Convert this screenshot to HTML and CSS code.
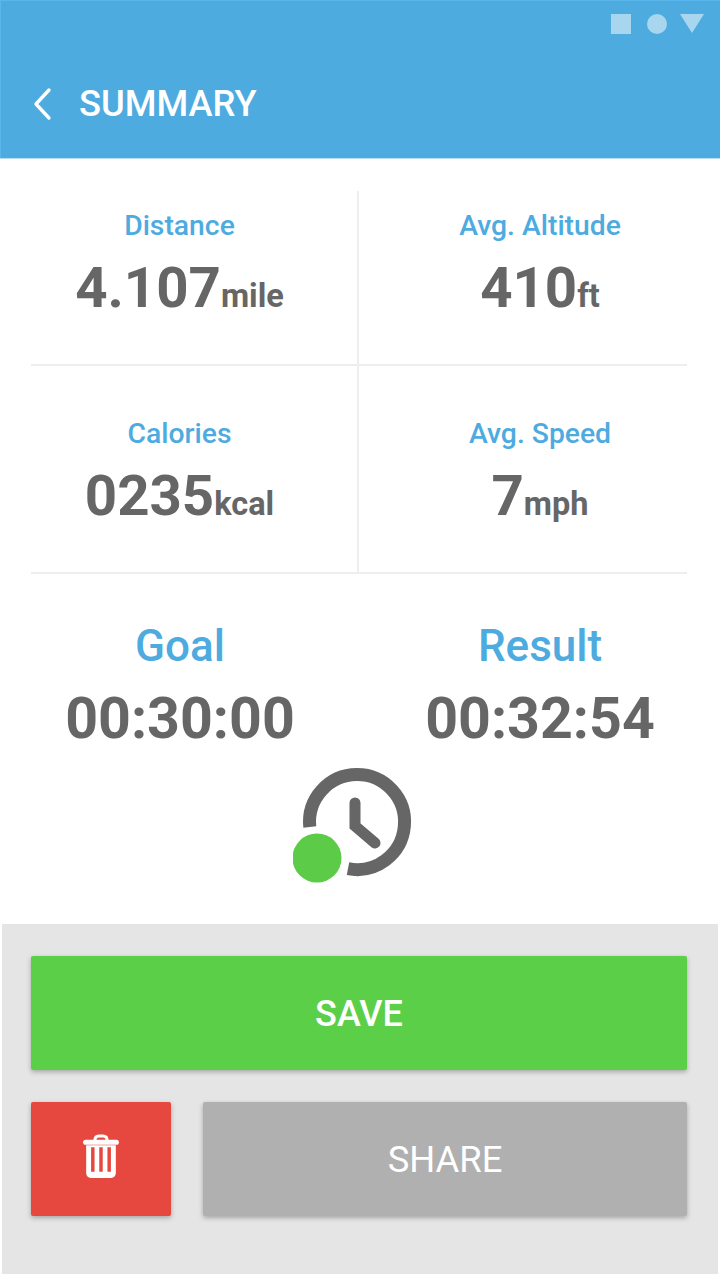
FILE: index.html
```html
<!DOCTYPE html>
<html lang="en">
<head>
<meta charset="utf-8">
<title>Summary</title>
<link rel="stylesheet" href="styles.css">
</head>
<body>
<div class="screen">
  <header class="appbar">
    <div class="status">
      <span class="st-square"></span>
      <span class="st-circle"></span>
      <svg class="st-tri" width="24" height="20" viewBox="0 0 24 20"><path d="M0 0H24L12 19Z" fill="#a8d6ef"/></svg>
    </div>
    <div class="titlebar">
      <svg class="back" width="20" height="34" viewBox="0 0 20 34"><path d="M17 3L4 17L17 31" fill="none" stroke="#fff" stroke-width="3.4" stroke-linecap="round" stroke-linejoin="round"/></svg>
      <h1 class="title">SUMMARY</h1>
    </div>
  </header>

  <section class="stats">
    <div class="stat stat-l">
      <div class="label">Distance</div>
      <div class="value">4.107<span class="unit">mile</span></div>
    </div>
    <div class="stat stat-e">
      <div class="label">Avg. Altitude</div>
      <div class="value">410<span class="unit">ft</span></div>
    </div>
    <div class="stat stat-l">
      <div class="label">Calories</div>
      <div class="value">0235<span class="unit">kcal</span></div>
    </div>
    <div class="stat stat-e">
      <div class="label">Avg. Speed</div>
      <div class="value">7<span class="unit">mph</span></div>
    </div>
  </section>

  <section class="times">
    <div class="time">
      <div class="time-label">Goal</div>
      <div class="time-value">00:30:00</div>
    </div>
    <div class="time">
      <div class="time-label">Result</div>
      <div class="time-value">00:32:54</div>
    </div>
  </section>

  <div class="clock-wrap">
    <svg class="clock" width="124" height="120" viewBox="0 0 124 120">
      <path d="M16.800 60A47.500 47.500 0 1 1 55 101.700" fill="none" stroke="#666" stroke-width="13"/>
      <path d="M62 36V59L82 76" fill="none" stroke="#666" stroke-width="11" stroke-linecap="round" stroke-linejoin="miter"/>
      <circle cx="24" cy="91" r="24.500" fill="#5ccb47"/>
    </svg>
  </div>

  <section class="actions">
    <button class="btn btn-save">SAVE</button>
    <div class="action-row">
      <button class="btn btn-trash" aria-label="Delete">
        <svg class="trash" width="38" height="45" viewBox="0 0 36 44">
          <path d="M12 6.500C12 3 14 2 16 2H20C22 2 24 3 24 6.500" fill="none" stroke="#fff" stroke-width="3"/>
          <rect x="0.500" y="5.500" width="35" height="5" rx="2.500" fill="#fff"/>
          <path d="M3.500 11H32.500V38C32.500 41 30.500 43 28 43H8C5.500 43 3.500 41 3.500 38Z" fill="#fff"/>
          <path d="M10 13V37M18 13V37M26 13V37" stroke="#e6483f" stroke-width="3.400" fill="none"/>
        </svg>
      </button>
      <button class="btn btn-share">SHARE</button>
    </div>
  </section>
</div>
</body>
</html>
```

FILE: styles.css
```css
* { box-sizing: border-box; }
html, body { margin: 0; padding: 0; }
body { background: #fff; font-family: Roboto, "Liberation Sans", sans-serif; }
.screen { width: 720px; height: 1278px; display: flex; flex-direction: column; overflow: hidden; }

.appbar { height: 159px; background: #4dabe0; display: flex; flex-direction: column; padding: 14px 16px 0 32px; border-bottom: 1px solid #b9dcf2; box-shadow: inset 0 1px 0 #5ab6ec, inset 1px 0 0 #5ab6ec; }
.status { display: flex; justify-content: flex-end; align-items: flex-start; gap: 16px; height: 21px; }
.st-square { width: 20px; height: 20px; background: #a8d6ef; }
.st-circle { width: 20px; height: 20px; border-radius: 50%; background: #a8d6ef; margin-right: -3px; }
.titlebar { display: flex; align-items: center; gap: 27px; margin-top: 49px; }
.back { display: block; }
.title { margin: 0; font-size: 36.300px; font-weight: 500; line-height: 40px; color: #fff; }

.stats { margin: 32px 33px 0 31px; display: grid; grid-template-columns: 328px 328px; grid-template-rows: 175px 208px; }
.stat { display: flex; flex-direction: column; align-items: center; border-bottom: 2px solid #eeeeee; }
.stat:nth-child(-n+2) { padding-top: 20px; }
.stat:nth-child(n+3) { padding-top: 53px; }
.stat-l { border-right: 2px solid #eeeeee; padding-right: 29px; }
.stat-e { padding-left: 34px; }
.label { font-size: 28.300px; font-weight: 500; line-height: 30px; color: #4dabe0; }
.value { font-size: 56.400px; font-weight: 700; line-height: 64px; color: #666; margin-top: 15px; white-space: nowrap; }
.unit { font-size: 32.500px; font-weight: 700; }

.times { display: grid; grid-template-columns: 360px 360px; margin-top: 48px; }
.time { display: flex; flex-direction: column; align-items: center; }
.time-label { font-size: 44px; font-weight: 500; line-height: 48px; color: #4dabe0; }
.time-value { font-size: 57.300px; font-weight: 700; line-height: 64px; color: #666; margin-top: 17px; }

.clock-wrap { display: flex; justify-content: center; padding: 16px 10px 0 0; height: 173px; }
.clock { display: block; }

.actions { margin: 0 2px; flex: 1; max-height: 350px; background: #e5e5e5; padding: 32px 31px 0 29px; display: flex; flex-direction: column; gap: 32px; }
.btn { border: 0; padding: 0; margin: 0; height: 114px; font-family: inherit; font-size: 36px; font-weight: 500; color: #fff; border-radius: 2px; box-shadow: 0 2px 5px rgba(0,0,0,.28); display: flex; align-items: center; justify-content: center; }
.btn-save { width: 656px; background: #5ccf48; padding-top: 2px; }
.action-row { display: flex; gap: 32px; }
.btn-trash { width: 140px; background: #e6483f; }
.trash { display: block; margin-bottom: 6px; }
.btn-share { width: 484px; background: #b0b0b0; font-size: 36.400px; font-weight: 400; }
```
